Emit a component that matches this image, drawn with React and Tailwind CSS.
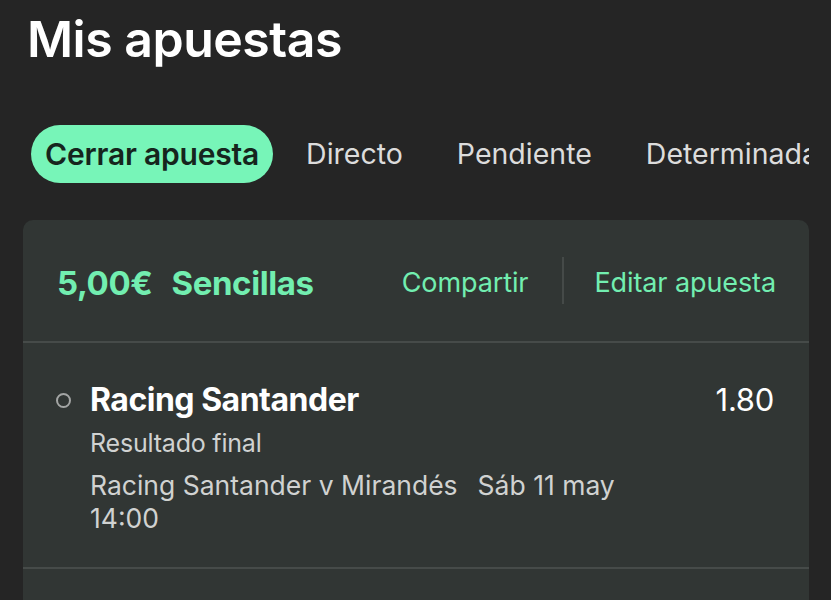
export default function App() {
  const tabs = ['Directo', 'Pendiente', 'Determinada']

  return (
    <div className="h-[600px] w-full overflow-hidden bg-[#252525] font-['Inter','Liberation_Sans',sans-serif] text-white">
      {/* Title */}
      <h1 className="pl-[27px] pt-[14px] text-[50px] font-semibold leading-none tracking-[-0.5px]">
        Mis apuestas
      </h1>

      {/* Tabs */}
      <div className="mr-[22px] mt-[61px] overflow-hidden">
        <div className="flex items-center whitespace-nowrap pl-[31px]">
          <button className="flex h-[58px] items-center rounded-full bg-[#77f5b8] px-[14px] text-[30px] font-semibold tracking-[-0.2px] text-[#16251d]">
            Cerrar apuesta
          </button>
          <div className="ml-[6px] flex">
            {tabs.map((t) => (
              <span key={t} className="px-[27px] text-[28.5px] text-[#dcdcdc]">
                {t}
              </span>
            ))}
          </div>
        </div>
      </div>

      {/* Card */}
      <div className="ml-[23px] mr-[22px] mt-[37px] rounded-t-[10px] bg-[#313634]">
        <div className="flex h-[121px] items-center justify-between pl-[34px] pr-[33px] pt-[6px]">
          <div className="flex items-center gap-[19px] text-[33px] font-bold tracking-[-0.4px] text-[#72eeb0]">
            <span>5,00€</span>
            <span>Sencillas</span>
          </div>
          <div className="flex items-center text-[27px] tracking-[-0.1px] text-[#72eeb0]">
            <span>Compartir</span>
            <span className="-mt-[6px] ml-[34px] mr-[30px] h-[47px] w-[2px] bg-[#454a48]" />
            <span>Editar apuesta</span>
          </div>
        </div>

        <div className="h-[2px] bg-[#464b49]" />

        <div className="flex pb-[32px] pl-[33px] pr-[35px] pt-[37px]">
          <div className="flex h-[40px] w-[34px] shrink-0 items-center">
            <span className="h-[15px] w-[15px] rounded-full border-2 border-[#a3a5a4]" />
          </div>
          <div className="flex-1">
            <div className="flex items-center justify-between">
              <span className="text-[32px] font-bold leading-[40px] tracking-[-0.5px]">Racing Santander</span>
              <span className="text-[31px] leading-[40px] tracking-[-0.3px]">1.80</span>
            </div>
            <div className="mt-[7px] text-[25px] leading-[32px] tracking-[-0.2px] text-[#d0d2d1]">Resultado final</div>
            <div className="mt-[10px] text-[26.5px] leading-[33px] text-[#d0d2d1]">
              <span>Racing Santander v Mirandés</span>
              <span className="ml-[20px]">Sáb 11 may</span>
              <br />
              <span>14:00</span>
            </div>
          </div>
        </div>

        <div className="h-[2px] bg-[#464b49]" />
        <div className="h-[60px]" />
      </div>
    </div>
  )
}
